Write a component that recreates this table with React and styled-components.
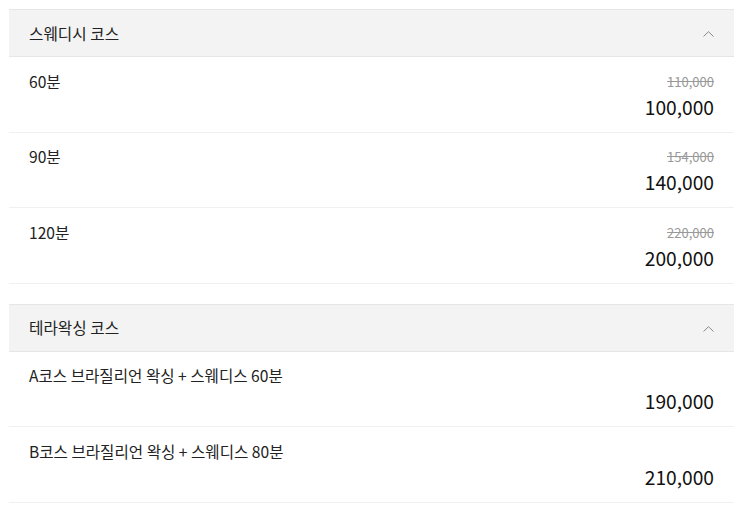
import React from "react";
import styled, { createGlobalStyle } from "styled-components";

const GlobalStyle = createGlobalStyle`
  body {
    margin: 0;
    background: #fff;
    font-family: "Noto Sans CJK KR", "Noto Sans", sans-serif;
    color: #222;
  }
`;

const Page = styled.div`
  padding: 9px 8px 0 9px;
`;

const Section = styled.section`
  margin-bottom: 20px;
`;

const Header = styled.div`
  display: flex;
  justify-content: space-between;
  align-items: center;
  height: 46px;
  padding: 0 20px;
  background-color: #f3f3f3;
  border-top: 1px solid #e6e6e6;
  border-bottom: 1px solid #e6e6e6;
`;

const HeaderTitle = styled.h2`
  margin: 0;
  font-size: 15.7px;
  font-weight: normal;
  color: #222;
`;

const Row = styled.div`
  display: flex;
  justify-content: space-between;
  align-items: flex-start;
  padding: 14.5px 20px 10px;
  border-bottom: 1px solid #f0f0f0;
`;

const RowTitle = styled.div`
  font-size: 15.6px;
  line-height: 18px;
`;

const Prices = styled.div`
  display: flex;
  flex-direction: column;
  align-items: flex-end;
`;

const OldPrice = styled.span`
  height: 20px;
  font-size: 13px;
  line-height: 20px;
  color: #999;
  text-decoration: line-through;
`;

const Price = styled.span`
  font-size: 19.2px;
  line-height: 30px;
  color: #111;
`;

const Chevron = () => (
  <svg width="11" height="6" viewBox="0 0 11 6" fill="none" style={{ marginTop: 2 }}>
    <polyline points="0.5,5.5 5.5,0.7 10.5,5.5" stroke="#888" strokeWidth="1" />
  </svg>
);

const courses = [
  {
    title: "스웨디시 코스",
    items: [
      { name: "60분", old: "110,000", price: "100,000" },
      { name: "90분", old: "154,000", price: "140,000" },
      { name: "120분", old: "220,000", price: "200,000" },
    ],
  },
  {
    title: "테라왁싱 코스",
    items: [
      { name: "A코스 브라질리언 왁싱 + 스웨디스 60분", price: "190,000" },
      { name: "B코스 브라질리언 왁싱 + 스웨디스 80분", price: "210,000" },
    ],
  },
];

export default function App() {
  return (
    <Page>
      <GlobalStyle />
      {courses.map(course => (
        <Section key={course.title}>
          <Header>
            <HeaderTitle>{course.title}</HeaderTitle>
            <Chevron />
          </Header>
          {course.items.map(item => (
            <Row key={item.name}>
              <RowTitle>{item.name}</RowTitle>
              <Prices>
                <OldPrice>{item.old}</OldPrice>
                <Price>{item.price}</Price>
              </Prices>
            </Row>
          ))}
        </Section>
      ))}
    </Page>
  );
}
